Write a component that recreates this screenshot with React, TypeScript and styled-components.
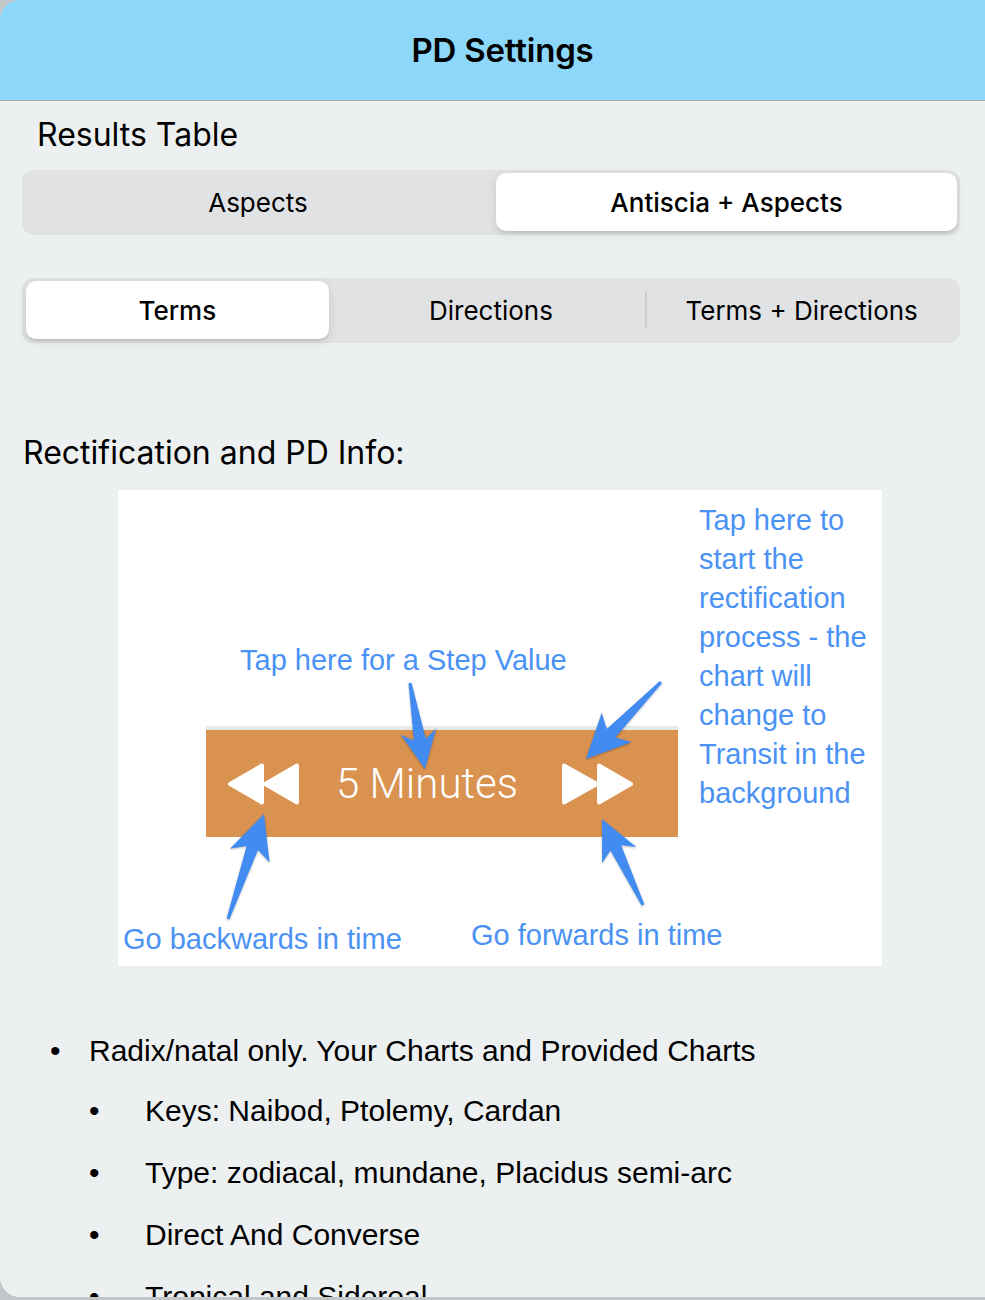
import React from "react";
import styled, { createGlobalStyle } from "styled-components";

const GlobalStyle = createGlobalStyle`
  html, body {
    margin: 0;
    padding: 0;
    background: #c3c6c8;
    overflow: hidden;
  }
  body {
    width: 985px;
    height: 1300px;
  }
  * { box-sizing: border-box; }
`;

const Sheet = styled.div`
  width: 1005px;
  height: 1297px;
  border-radius: 20px;
  overflow: hidden;
  background: #edf0f1;
  display: flex;
  flex-direction: column;
`;

const Header = styled.header`
  height: 101px;
  flex: none;
  background: #8dd8fa;
  border-bottom: 1px solid #a8abad;
  display: flex;
  align-items: center;
  justify-content: center;
`;

const Title = styled.h1`
  margin: 0;
  font-family: Inter, "Noto Sans", sans-serif;
  font-weight: 600;
  font-size: 33px;
  letter-spacing: -0.2px;
  color: #000;
`;

const Content = styled.main`
  width: 985px;
  padding: 0 25px 0 22px;
  display: flex;
  flex-direction: column;
`;

const SectionLabel = styled.div`
  margin-top: 15px;
  padding-left: 15px;
  font-family: Inter, "Noto Sans", sans-serif;
  font-size: 32px;
  line-height: 38px;
  font-weight: 400;
  color: #000;
`;

const Segmented = styled.div<{ $cols: number; $top: number }>`
  margin-top: ${(p) => p.$top}px;
  height: 64px;
  padding: 3px;
  border-radius: 12px;
  background: #e1e2e4;
  box-shadow: 0 1px 0 rgba(0, 0, 0, 0.06);
  display: grid;
  grid-template-columns: repeat(${(p) => p.$cols}, 1fr);
`;

const Segment = styled.div<{
  $active?: boolean;
  $divider?: boolean;
  $inset?: string;
}>`
  position: relative;
  display: flex;
  align-items: center;
  justify-content: center;
  border-radius: 10px;
  margin: ${(p) => p.$inset ?? "0"};
  font-family: Inter, "Noto Sans", sans-serif;
  font-size: 26px;
  font-weight: ${(p) => (p.$active ? 500 : 400)};
  color: #000;
  background: ${(p) => (p.$active ? "#ffffff" : "transparent")};
  box-shadow: ${(p) =>
    p.$active
      ? "0 3px 8px rgba(0,0,0,0.12), 0 2px 1px rgba(0,0,0,0.05)"
      : "none"};
  &::before {
    content: "";
    display: ${(p) => (p.$divider ? "block" : "none")};
    position: absolute;
    left: -1px;
    top: 11px;
    bottom: 11px;
    width: 2px;
    background: #cbcccf;
  }
`;

const InfoHeading = styled.div`
  margin-top: 92px;
  padding-left: 1px;
  font-family: Inter, "Noto Sans", sans-serif;
  font-size: 32px;
  line-height: 38px;
  color: #000;
`;

const Picture = styled.div`
  position: relative;
  margin-top: 18px;
  margin-left: 96px;
  width: 764px;
  height: 476px;
  background: #ffffff;
`;

const Bar = styled.div`
  position: absolute;
  left: 88px;
  top: 236px;
  width: 472px;
  height: 111px;
  border-top: 4px solid #e4e9ea;
  background: #d9924f;
  display: grid;
  grid-template-columns: 72px 1fr 72px;
  align-items: center;
  padding: 0 44px 0 22px;
`;

const BarValue = styled.div`
  text-align: center;
  font-family: Roboto, "Open Sans", sans-serif;
  font-weight: 300;
  font-size: 42px;
  color: #ffffff;
  padding-right: 8px;
`;

const Label = styled.div<{ $left: number; $top: number }>`
  position: absolute;
  left: ${(p) => p.$left}px;
  top: ${(p) => p.$top}px;
  font-family: "Liberation Sans", Arial, sans-serif;
  font-size: 29px;
  line-height: 34px;
  color: #4a92f4;
  white-space: nowrap;
`;

const SideNote = styled(Label)`
  line-height: 39px;
`;

const Line = styled.span`
  display: block;
`;

const ArrowLayer = styled.svg`
  position: absolute;
  left: 0;
  top: 0;
  width: 764px;
  height: 476px;
  pointer-events: none;
  filter: drop-shadow(0 1px 1px rgba(0, 0, 0, 0.25));
`;

const List = styled.div`
  margin-top: 68px;
  display: flex;
  flex-direction: column;
  font-family: "Liberation Sans", Arial, sans-serif;
  font-size: 30px;
  line-height: 34px;
  color: #000;
`;

const Item = styled.div<{ $sub?: boolean; $gap?: number }>`
  display: flex;
  align-items: baseline;
  padding-left: ${(p) => (p.$sub ? 67 : 28)}px;
  margin-top: ${(p) => p.$gap ?? 0}px;
`;

const Bullet = styled.span<{ $sub?: boolean }>`
  flex: none;
  width: ${(p) => (p.$sub ? 56 : 39)}px;
`;

type Pt = [number, number];

function arrowPoints(
  tail: Pt,
  tip: Pt,
  headLen: number,
  headHalf: number,
  tailHalf: number,
  neckHalf: number
): string {
  const dx = tip[0] - tail[0];
  const dy = tip[1] - tail[1];
  const len = Math.hypot(dx, dy);
  const ux = dx / len;
  const uy = dy / len;
  const nx = -uy;
  const ny = ux;
  const neck: Pt = [tip[0] - ux * (headLen - 8), tip[1] - uy * (headLen - 8)];
  const wing: Pt = [tip[0] - ux * headLen, tip[1] - uy * headLen];
  const pts: Pt[] = [
    [tail[0] + nx * tailHalf, tail[1] + ny * tailHalf],
    [neck[0] + nx * neckHalf, neck[1] + ny * neckHalf],
    [wing[0] + nx * headHalf, wing[1] + ny * headHalf],
    tip,
    [wing[0] - nx * headHalf, wing[1] - ny * headHalf],
    [neck[0] - nx * neckHalf, neck[1] - ny * neckHalf],
    [tail[0] - nx * tailHalf, tail[1] - ny * tailHalf],
  ];
  return pts.map((p) => `${p[0].toFixed(1)},${p[1].toFixed(1)}`).join(" ");
}

const arrows: { tail: Pt; tip: Pt; head: number; half: number }[] = [
  { tail: [292, 193], tip: [307, 279], head: 38, half: 18 },
  { tail: [543, 192], tip: [468, 269], head: 44, half: 21 },
  { tail: [110, 429], tip: [146, 324], head: 44, half: 21 },
  { tail: [525, 415], tip: [484, 329], head: 40, half: 19 },
];

const Rewind = () => (
  <svg width="72" height="42" viewBox="0 0 72 42">
    <g fill="#fff" stroke="#fff" strokeWidth="4" strokeLinejoin="round">
      <polygon points="2,21 34,2.5 34,39.5" />
      <polygon points="37,21 69,2.5 69,39.5" />
    </g>
  </svg>
);

const Forward = () => (
  <svg width="72" height="42" viewBox="0 0 72 42">
    <g fill="#fff" stroke="#fff" strokeWidth="4" strokeLinejoin="round">
      <polygon points="2,2.5 2,39.5 35,21" />
      <polygon points="37,2.5 37,39.5 69,21" />
    </g>
  </svg>
);

export default function App() {
  return (
    <>
      <GlobalStyle />
      <Sheet>
        <Header>
          <Title>PD Settings</Title>
        </Header>
        <Content>
          <SectionLabel>Results Table</SectionLabel>
          <Segmented $cols={2} $top={16}>
            <Segment>Aspects</Segment>
            <Segment $active $inset="0 0 0 5px">
              Antiscia + Aspects
            </Segment>
          </Segmented>
          <Segmented $cols={3} $top={44}>
            <Segment $active $inset="0 7px 0 1px">
              Terms
            </Segment>
            <Segment>Directions</Segment>
            <Segment $divider>Terms + Directions</Segment>
          </Segmented>

          <InfoHeading>Rectification and PD Info:</InfoHeading>
          <Picture>
            <Bar>
              <Rewind />
              <BarValue>5 Minutes</BarValue>
              <Forward />
            </Bar>
            <Label $left={122} $top={153}>
              Tap here for a Step Value
            </Label>
            <SideNote $left={581} $top={11}>
              <Line>Tap here to</Line>
              <Line>start the</Line>
              <Line>rectification</Line>
              <Line>process - the</Line>
              <Line>chart will</Line>
              <Line>change to</Line>
              <Line>Transit in the</Line>
              <Line>background</Line>
            </SideNote>
            <Label $left={5} $top={432}>
              Go backwards in time
            </Label>
            <Label $left={353} $top={428}>
              Go forwards in time
            </Label>
            <ArrowLayer viewBox="0 0 764 476">
              {arrows.map((a, i) => (
                <polygon
                  key={i}
                  fill="#418bf1"
                  points={arrowPoints(a.tail, a.tip, a.head, a.half, 1.5, 6)}
                />
              ))}
            </ArrowLayer>
          </Picture>

          <List>
            <Item>
              <Bullet>•</Bullet>
              <span>Radix/natal only. Your Charts and Provided Charts</span>
            </Item>
            <Item $sub $gap={26}>
              <Bullet $sub>•</Bullet>
              <span>Keys: Naibod, Ptolemy, Cardan</span>
            </Item>
            <Item $sub $gap={28}>
              <Bullet $sub>•</Bullet>
              <span>Type: zodiacal, mundane, Placidus semi-arc</span>
            </Item>
            <Item $sub $gap={28}>
              <Bullet $sub>•</Bullet>
              <span>Direct And Converse</span>
            </Item>
            <Item $sub $gap={28}>
              <Bullet $sub>•</Bullet>
              <span>Tropical and Sidereal</span>
            </Item>
          </List>
        </Content>
      </Sheet>
    </>
  );
}
